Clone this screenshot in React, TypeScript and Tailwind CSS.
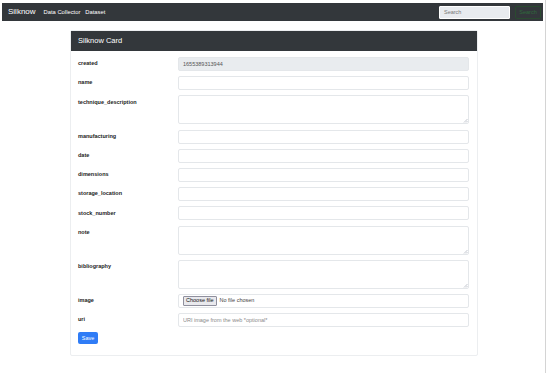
import React from "react";

const fields: { name: string; kind: "input" | "textarea" | "file" | "readonly" | "url" }[] = [
  { name: "created", kind: "readonly" },
  { name: "name", kind: "input" },
  { name: "technique_description", kind: "textarea" },
  { name: "manufacturing", kind: "input" },
  { name: "date", kind: "input" },
  { name: "dimensions", kind: "input" },
  { name: "storage_location", kind: "input" },
  { name: "stock_number", kind: "input" },
  { name: "note", kind: "textarea" },
  { name: "bibliography", kind: "textarea" },
  { name: "image", kind: "file" },
  { name: "uri", kind: "url" },
];

function ResizeGrip() {
  return (
    <svg
      className="absolute right-[1px] bottom-[1px]"
      width="5"
      height="5"
      viewBox="0 0 5 5"
    >
      <path d="M4.5 1 L1 4.5 M4.5 3 L3 4.5" stroke="#9ca3af" strokeWidth="0.6" />
    </svg>
  );
}

function Field({ kind }: { kind: string }) {
  const base =
    "block w-full h-[14px] rounded-[2px] border border-[#e4e7ea] px-[4px] text-[5.5px] text-[#555] outline-none";

  if (kind === "readonly") {
    return <input readOnly value="1655389313944" className={`${base} bg-[#e9ecef]`} />;
  }
  if (kind === "textarea") {
    return (
      <div className="relative w-full">
        <textarea className="block w-full h-[29px] rounded-[2px] border border-[#e4e7ea] resize-none outline-none" />
        <ResizeGrip />
      </div>
    );
  }
  if (kind === "file") {
    return (
      <div className="w-full h-[14px] rounded-[2px] border border-[#e4e7ea] flex items-center px-[4px] gap-[3px] text-[5.5px] text-[#444]">
        <span className="px-[2px] py-[1px] bg-[#e9e9ed] border border-[#8f8f9d] rounded-[1px] text-[#111] leading-none">
          Choose file
        </span>
        <span>No file chosen</span>
      </div>
    );
  }
  if (kind === "url") {
    return (
      <input
        placeholder="URI image from the web *optional*"
        className={`${base} h-[13px] placeholder:text-[#8a8a8a]`}
      />
    );
  }
  return <input className={base} />;
}

export default function App() {
  return (
    <div
      className="w-[550px] h-[373px] bg-white flex overflow-hidden"
      style={{ fontFamily: '"Liberation Sans", Arial, sans-serif' }}
    >
      <div className="w-[545px] pt-[3px] pl-[2px] pr-[2px]">
        <nav className="h-[18px] bg-[#33373b] flex items-center pl-[6px] pr-[2px]">
          <span className="text-white text-[8px] mr-[8px]">Silknow</span>
          <span className="text-white text-[5.8px] mr-[5px]">Data Collector</span>
          <span className="text-white text-[5.8px]">Dataset</span>
          <div className="ml-auto flex items-center gap-[5px]">
            <div className="w-[71px] h-[13px] bg-[#e8ebef] rounded-[1px] border border-white flex items-center px-[4px] text-[5.5px] text-[#777]">
              Search
            </div>
            <div className="w-[26px] h-[13px] rounded-[2px] border border-[#2a4a30] flex items-center justify-center text-[5.5px] text-[#2f6a3c]">
              Search
            </div>
          </div>
        </nav>

        <div className="ml-[68px] mt-[9px] w-[408px] border border-[#eceef0] rounded-[2px]">
          <div className="h-[20px] bg-[#33373b] flex items-center px-[7px] text-white text-[7.5px]">
            Silknow Card
          </div>
          <div className="pt-[6px] pl-[7px] pr-[8px] pb-[11px] flex flex-col gap-[5.2px] leading-none">
            {fields.map((f) => (
              <div key={f.name} className="flex">
                <div className="w-[100px] h-[14px] flex items-center text-[5.5px] font-bold text-[#222]">
                  {f.name}
                </div>
                <div className="flex-1">
                  <Field kind={f.kind} />
                </div>
              </div>
            ))}
            <div>
              <button className="w-[20px] h-[12px] bg-[#2f7cf6] rounded-[2px] text-white text-[5.5px] flex items-center justify-center">
                Save
              </button>
            </div>
          </div>
        </div>
      </div>
      <div className="w-px h-full bg-[#d4d4d4]" />
    </div>
  );
}
